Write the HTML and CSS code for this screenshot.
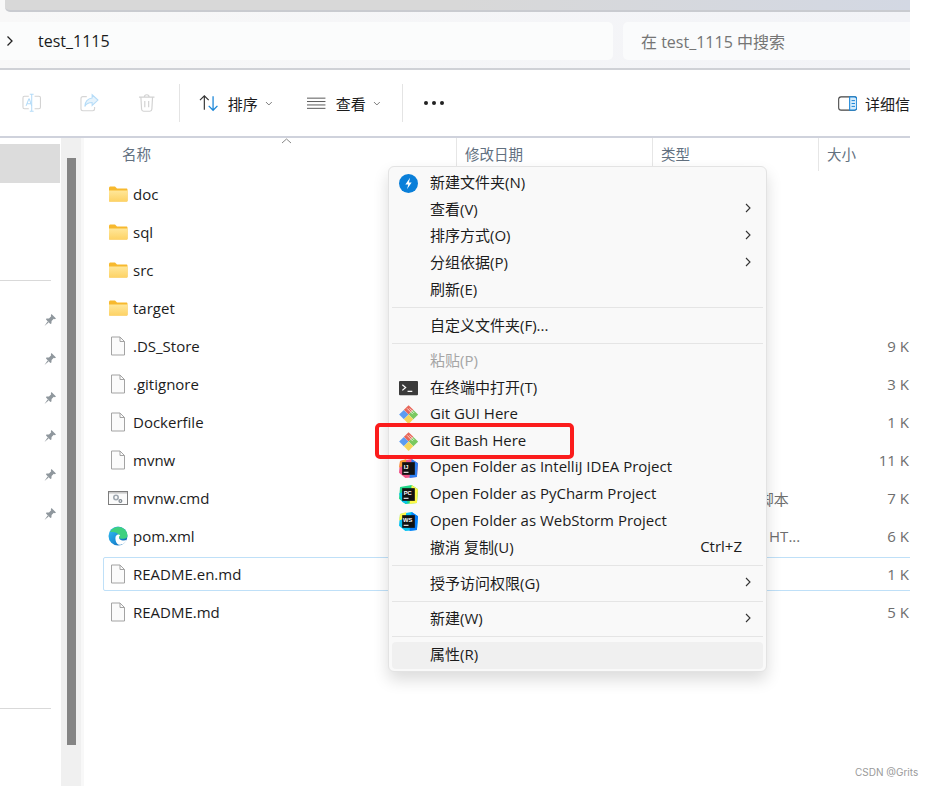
FILE: index.html
```html
<!DOCTYPE html>
<html lang="zh-CN">
<head>
  <meta charset="UTF-8">
  <title>test_1115 - 文件资源管理器</title>
  <link rel="stylesheet" href="styles.css">
</head>
<body>

<svg class="defs" width="0" height="0">
  <defs>
    <linearGradient id="folderFill" x1="0" y1="0" x2="0" y2="1">
      <stop offset="0" stop-color="#ffe79a"/>
      <stop offset="1" stop-color="#fdd264"/>
    </linearGradient>
    <linearGradient id="edgeFill" x1="0" y1="0" x2="1" y2="1">
      <stop offset="0" stop-color="#35c1f1"/>
      <stop offset="0.55" stop-color="#1b8fd8"/>
      <stop offset="1" stop-color="#0c59a4"/>
    </linearGradient>
    <symbol id="i-folder" viewBox="0 0 20 18">
      <path d="M1 3.2C1 2 1.6 1.5 2.6 1.5H7L9 3.5H18.2C19 3.5 19.5 4 19.5 4.8V15.4C19.5 16.2 19 16.6 18.2 16.6H2.2C1.4 16.6 1 16.2 1 15.4Z" fill="#f7b92e"/>
      <path d="M1 5.4H19.5V15.4C19.5 16.2 19 16.6 18.2 16.6H2.2C1.4 16.6 1 16.2 1 15.4Z" fill="url(#folderFill)"/>
    </symbol>
    <symbol id="i-file" viewBox="0 0 20 20">
      <path d="M3.5 1H12L16.5 5.5V19H3.5Z" fill="#fbfbfb" stroke="#a3a3a3"/>
      <path d="M12 1V5.5H16.5" fill="none" stroke="#a3a3a3"/>
    </symbol>
    <symbol id="i-cmd" viewBox="0 0 20 18">
      <rect x="0.5" y="2.5" width="19" height="13" fill="#fbfbfb" stroke="#7d7d7d"/>
      <rect x="1" y="3" width="18" height="1.6" fill="#c9c9c9"/>
      <circle cx="8" cy="8.5" r="2.2" fill="none" stroke="#a0a8b0" stroke-width="1.6"/>
      <circle cx="12.4" cy="12" r="1.4" fill="none" stroke="#7f8890" stroke-width="1.2"/>
    </symbol>
    <symbol id="i-edge" viewBox="0 0 20 20">
      <circle cx="10" cy="10" r="9.5" fill="url(#edgeFill)"/>
      <path d="M2 6C5 0 15 -1 18.6 6C20 9 19.6 12 17 12.6C14 13.2 10 12.6 10.6 9.6C11 7 7 5.5 2 6Z" fill="#3fd07f"/>
      <path d="M7.4 12.2C7.4 8.5 10.6 7.8 12.2 9.2C10.6 10 10.4 13.2 13.4 14.2C15.4 14.8 17.6 14.6 19 13.6C17.8 17.4 13.4 19.6 10.2 18.6C8.4 17.6 7.4 15 7.4 12.2Z" fill="#fff"/>
    </symbol>
    <symbol id="i-git" viewBox="0 0 20 20">
      <rect x="1.6" y="6.6" width="7" height="7" transform="rotate(45 5.1 10.1)" fill="#5c9cf2"/>
      <rect x="6.6" y="1.6" width="7" height="7" transform="rotate(45 10.1 5.1)" fill="#e8675a"/>
      <rect x="11.6" y="6.6" width="7" height="7" transform="rotate(45 15.1 10.1)" fill="#79c95f"/>
      <rect x="6.6" y="11.6" width="7" height="7" transform="rotate(45 10.1 15.1)" fill="#f5d55a"/>
      <path d="M8.6 3.6L14.5 9.6M11.2 3.6L16 8.4" stroke="#fff" stroke-width="0.8"/>
    </symbol>
    <symbol id="i-pin" viewBox="0 0 14 14">
      <path d="M8.5 1L13 5.5L11.8 6.2L10.8 5.8L8.6 8L8.4 10.6L7.4 11L3 6.6L3.4 5.6L6 5.4L8.2 3.2L7.8 2.2ZM4.6 8.4L5.6 9.4L1.5 13Z" fill="#8f979d"/>
    </symbol>
    <symbol id="i-chevron" viewBox="0 0 6 10">
      <path d="M1 1L5 5L1 9" fill="none" stroke="#333" stroke-width="1.1"/>
    </symbol>
  </defs>
</svg>

<div class="page">
  <div class="window">

    <div class="top">
      <div class="titlebar"></div>
      <div class="address-row">
        <div class="address">
          <svg class="crumb" width="8" height="12" viewBox="0 0 8 12"><path d="M1.5 1.5L6 6L1.5 10.5" fill="none" stroke="#222" stroke-width="1.3"/></svg>
          <span>test_1115</span>
        </div>
        <div class="search">在 test_1115 中搜索</div>
      </div>
    </div>

    <div class="toolbar">
      <svg class="tool-rename" width="20" height="20" viewBox="0 0 20 20">
        <path d="M7 3H2.5C1.4 3 1 3.6 1 4.5V14.5C1 15.5 1.4 16 2.5 16H7M13 3H17.5C18.6 3 19 3.6 19 4.5V14.5C19 15.5 18.6 16 17.5 16H13" fill="none" stroke="#d2d2d2" stroke-width="1.1"/>
        <path d="M10 1V18.5M8 1H12M8 18.5H12" fill="none" stroke="#b5dcf8" stroke-width="1.1"/>
        <path d="M4.2 13L7 6H7.6L10 13M5 10.8H9" fill="none" stroke="#b5dcf8" stroke-width="1.1"/>
      </svg>
      <svg class="tool-share" width="20" height="20" viewBox="0 0 20 20">
        <path d="M7 3.5H3C1.8 3.5 1 4.3 1 5.5V16C1 17.2 1.8 18 3 18H13C14.2 18 15 17.2 15 16V14" fill="none" stroke="#d5d5d5" stroke-width="1.2"/>
        <path d="M12.5 1.5L18.5 7L12.5 12.5V9.5C9 9.5 6.5 10.5 5 13.5C5 9 8 5.2 12.5 4.8Z" fill="#e6f3fc" stroke="#b5dcf8" stroke-width="1.1"/>
      </svg>
      <svg class="tool-trash" width="18" height="20" viewBox="0 0 18 20">
        <path d="M1 4H17M6.5 4C6.5 2.4 7.4 1.5 9 1.5C10.6 1.5 11.5 2.4 11.5 4M3 4L3.7 16.5C3.8 17.8 4.6 18.5 5.8 18.5H12.2C13.4 18.5 14.2 17.8 14.3 16.5L15 4M7 8V14.5M11 8V14.5" fill="none" stroke="#d2d2d2" stroke-width="1.2"/>
      </svg>
      <div class="tool-sep"></div>
      <svg class="tool-sort" width="20" height="18" viewBox="0 0 20 18">
        <path d="M5.5 16V1.5M1 6L5.5 1.5L10 6" fill="none" stroke="#333" stroke-width="1.2"/>
        <path d="M14.5 2V16.5M10 12L14.5 16.5L19 12" fill="none" stroke="#1a86d8" stroke-width="1.3"/>
      </svg>
      <span class="tool-label">排序</span>
      <svg class="caret" width="8" height="5" viewBox="0 0 8 5"><path d="M1 1L4 4L7 1" fill="none" stroke="#777"/></svg>
      <svg class="tool-view" width="19" height="12" viewBox="0 0 19 12">
        <path d="M0 1H19M0 4.5H19M0 8H19M0 11.5H19" stroke="#555" stroke-width="1"/>
      </svg>
      <span class="tool-label">查看</span>
      <svg class="caret" width="8" height="5" viewBox="0 0 8 5"><path d="M1 1L4 4L7 1" fill="none" stroke="#777"/></svg>
      <div class="tool-sep tool-sep-2"></div>
      <div class="dots"><i></i><i></i><i></i></div>
      <svg class="tool-details" width="20" height="15" viewBox="0 0 20 15">
        <rect x="0.7" y="0.7" width="18.6" height="13.6" rx="2.5" fill="#fff" stroke="#444" stroke-width="1.1"/>
        <path d="M12 0.7H17C18.5 0.7 19.3 1.5 19.3 3V12C19.3 13.5 18.5 14.3 17 14.3H12Z" fill="#d7ecfb" stroke="#1a86d8" stroke-width="1.1"/>
        <path d="M14 4.5H17.5M14 7.5H17.5M14 10.5H17.5" stroke="#1a86d8"/>
      </svg>
      <span class="tool-label">详细信</span>
    </div>

    <div class="explorer">
      <aside class="sidebar">
        <div class="nav-selected"></div>
        <div class="nav-line"></div>
        <div class="pins">
          <svg class="pin"><use href="#i-pin"/></svg>
          <svg class="pin"><use href="#i-pin"/></svg>
          <svg class="pin"><use href="#i-pin"/></svg>
          <svg class="pin"><use href="#i-pin"/></svg>
          <svg class="pin"><use href="#i-pin"/></svg>
          <svg class="pin"><use href="#i-pin"/></svg>
        </div>
        <div class="nav-line nav-line-2"></div>
      </aside>
      <div class="scrollbar"><div class="thumb"></div></div>

      <main class="files">
        <div class="file-head">
          <div class="head-cell head-name">名称
            <svg class="sort-mark" width="11" height="6" viewBox="0 0 11 6"><path d="M1 5L5.5 1L10 5" fill="none" stroke="#888"/></svg>
          </div>
          <div class="head-cell">修改日期</div>
          <div class="head-cell">类型</div>
          <div class="head-cell">大小</div>
        </div>
        <div class="file-list">
          <div class="file-row"><svg class="ficon"><use href="#i-folder"/></svg><span class="fname">doc</span></div>
          <div class="file-row"><svg class="ficon"><use href="#i-folder"/></svg><span class="fname">sql</span></div>
          <div class="file-row"><svg class="ficon"><use href="#i-folder"/></svg><span class="fname">src</span></div>
          <div class="file-row"><svg class="ficon"><use href="#i-folder"/></svg><span class="fname">target</span></div>
          <div class="file-row"><svg class="ficon"><use href="#i-file"/></svg><span class="fname">.DS_Store</span><span class="fsize">9 K</span></div>
          <div class="file-row"><svg class="ficon"><use href="#i-file"/></svg><span class="fname">.gitignore</span><span class="fsize">3 K</span></div>
          <div class="file-row"><svg class="ficon"><use href="#i-file"/></svg><span class="fname">Dockerfile</span><span class="fsize">1 K</span></div>
          <div class="file-row"><svg class="ficon"><use href="#i-file"/></svg><span class="fname">mvnw</span><span class="fsize">11 K</span></div>
          <div class="file-row"><svg class="ficon"><use href="#i-cmd"/></svg><span class="fname">mvnw.cmd</span><span class="ftype">Windows 命令脚本</span><span class="fsize">7 K</span></div>
          <div class="file-row"><svg class="ficon"><use href="#i-edge"/></svg><span class="fname">pom.xml</span><span class="ftype">Microsoft Edge HT...</span><span class="fsize">6 K</span></div>
          <div class="file-row focused"><svg class="ficon"><use href="#i-file"/></svg><span class="fname">README.en.md</span><span class="fsize">1 K</span></div>
          <div class="file-row"><svg class="ficon"><use href="#i-file"/></svg><span class="fname">README.md</span><span class="fsize">5 K</span></div>
        </div>
      </main>
    </div>
  </div>

  <div class="menu">
    <div class="menu-item">
      <svg class="micon" viewBox="0 0 18 18"><circle cx="9" cy="9" r="9" fill="#0a7fd9"/><path d="M10.5 3.5L6 10H8.8L7.6 14.5L12 8H9.4Z" fill="#fff"/></svg>
      <span>新建文件夹(N)</span>
    </div>
    <div class="menu-item"><span>查看(V)</span><svg class="arrow"><use href="#i-chevron"/></svg></div>
    <div class="menu-item"><span>排序方式(O)</span><svg class="arrow"><use href="#i-chevron"/></svg></div>
    <div class="menu-item"><span>分组依据(P)</span><svg class="arrow"><use href="#i-chevron"/></svg></div>
    <div class="menu-item"><span>刷新(E)</span></div>
    <div class="menu-sep"></div>
    <div class="menu-item"><span>自定义文件夹(F)...</span></div>
    <div class="menu-sep"></div>
    <div class="menu-item disabled"><span>粘贴(P)</span></div>
    <div class="menu-item">
      <svg class="micon" viewBox="0 0 20 18"><rect y="1" width="20" height="15" rx="1" fill="#3b3b3b"/><path d="M3.5 5L7 8L3.5 11" fill="none" stroke="#fff" stroke-width="1.3"/><path d="M9 12H14" stroke="#fff" stroke-width="1.3"/></svg>
      <span>在终端中打开(T)</span>
    </div>
    <div class="menu-item"><svg class="micon"><use href="#i-git"/></svg><span>Git GUI Here</span></div>
    <div class="menu-item"><svg class="micon"><use href="#i-git"/></svg><span>Git Bash Here</span></div>
    <div class="menu-item">
      <svg class="micon" viewBox="0 0 18 18"><path d="M1 2L12 0L18 4L17 17L6 18L0 13Z" fill="#f0568a"/><path d="M12 0L18 4L17 17L10 18Z" fill="#2f7ff0"/><path d="M1 2L7 0L6 6L0 8Z" fill="#fb9a33"/><rect x="3" y="3" width="12" height="12" fill="#111"/><text class="jb-text" x="4.4" y="9.4">IJ</text><path d="M4.4 12.6H9" stroke="#fff"/></svg>
      <span>Open Folder as IntelliJ IDEA Project</span>
    </div>
    <div class="menu-item">
      <svg class="micon" viewBox="0 0 18 18"><path d="M1 2L12 0L18 4L17 17L6 18L0 13Z" fill="#21d789"/><path d="M12 0L18 4L17 17L10 18Z" fill="#fcf84a"/><path d="M0 8L6 6L8 18L3 16Z" fill="#07c3f2"/><rect x="3" y="3" width="12" height="12" fill="#111"/><text class="jb-text" x="4.4" y="9.4">PC</text><path d="M4.4 12.6H9" stroke="#fff"/></svg>
      <span>Open Folder as PyCharm Project</span>
    </div>
    <div class="menu-item">
      <svg class="micon" viewBox="0 0 18 18"><path d="M1 2L12 0L18 4L17 17L6 18L0 13Z" fill="#07c3f2"/><path d="M12 0L18 4L17 17L10 18Z" fill="#087cfa"/><path d="M1 2L7 0L6 6L0 8Z" fill="#fcf84a"/><rect x="3" y="3" width="12" height="12" fill="#111"/><text class="jb-text" x="3.8" y="9.4">WS</text><path d="M4.4 12.6H9" stroke="#fff"/></svg>
      <span>Open Folder as WebStorm Project</span>
    </div>
    <div class="menu-item"><span>撤消 复制(U)</span><span class="shortcut">Ctrl+Z</span></div>
    <div class="menu-sep"></div>
    <div class="menu-item"><span>授予访问权限(G)</span><svg class="arrow"><use href="#i-chevron"/></svg></div>
    <div class="menu-sep"></div>
    <div class="menu-item"><span>新建(W)</span><svg class="arrow"><use href="#i-chevron"/></svg></div>
    <div class="menu-sep"></div>
    <div class="menu-item hover"><span>属性(R)</span></div>
  </div>

  <div class="red-box"></div>
  <div class="watermark">CSDN @Grits</div>
</div>

</body>
</html>
```

FILE: styles.css
```css
* {
  box-sizing: border-box;
}

body {
  margin: 0;
  background: white;
  font-family: "Open Sans", "Noto Sans CJK SC", sans-serif;
  color: #1c1c1c;
}

.defs {
  position: absolute;
}

.page {
  position: relative;
  width: 934px;
  height: 786px;
  overflow: hidden;
}

.window {
  display: flex;
  flex-direction: column;
  width: 910px;
  height: 786px;
  overflow: hidden;
  background: white;
}

/* title bar and address row */
.top {
  height: 70px;
  flex: none;
  background: linear-gradient(to right, #f8f8f8, #f2f3f7);
  border-bottom: 2px solid #cfd1d6;
}

.titlebar {
  height: 12px;
  margin-left: 5px;
  background: linear-gradient(to right, #d8d8d8 50%, #d3d8e3);
  border-bottom: 2px solid #c9cbd0;
  border-bottom-left-radius: 5px;
}

.address-row {
  display: flex;
  gap: 10px;
  height: 38px;
  margin-top: 10px;
}

.address {
  display: flex;
  align-items: center;
  width: 613px;
  padding-left: 6px;
  background: #fbfcfc;
  border-radius: 0 5px 5px 0;
  font-size: 16px;
}

.crumb {
  margin-right: 24px;
}

.search {
  flex: 1;
  padding: 7px 0 0 18px;
  background: #fafbfc;
  border-radius: 5px 0 0 5px;
  font-size: 16px;
  color: #757575;
}

/* command bar */
.toolbar {
  display: flex;
  align-items: center;
  height: 68px;
  flex: none;
  border-bottom: 2px solid #cfd2dc;
  font-size: 15px;
  white-space: nowrap;
}

.tool-rename { margin-left: 22px; }
.tool-share { margin-left: 39px; }
.tool-trash { margin-left: 38px; }

.tool-sep {
  width: 1px;
  height: 38px;
  margin-left: 24px;
  background: #e4e4e4;
}

.tool-sort { margin-left: 19px; margin-right: 9px; }
.caret { margin-left: 7px; }
.tool-view { margin-left: 35px; margin-right: 10px; }
.tool-sep-2 { margin-left: 21px; }

.dots {
  display: flex;
  gap: 4px;
  margin-left: 21px;
}

.dots i {
  width: 4px;
  height: 4px;
  border-radius: 50%;
  background: #222;
}

.tool-details { margin-left: 394px; margin-right: 8px; }

/* sidebar and scrollbar */
.explorer {
  display: flex;
  flex: 1;
  min-height: 0;
}

.sidebar {
  width: 61px;
  flex: none;
  padding-top: 6px;
}

.nav-selected {
  width: 60px;
  height: 39px;
  background: #dcdcdc;
}

.nav-line {
  width: 51px;
  height: 1px;
  margin-top: 97px;
  background: #d9d9d9;
}

.nav-line-2 {
  margin-top: 187px;
}

.pins {
  display: flex;
  flex-direction: column;
  align-items: flex-end;
  gap: 24.8px;
  margin-top: 32px;
  padding-right: 4px;
}

.pin {
  width: 14px;
  height: 14px;
}

.scrollbar {
  width: 23px;
  flex: none;
  padding: 20px 0 0 6px;
  background: #f0f0f0;
  border-right: 3px solid #f8f8f8;
}

.thumb {
  width: 9px;
  height: 587px;
  background: #858585;
}

/* file list */
.files {
  width: 826px;
  flex: none;
}

.file-head {
  display: grid;
  grid-template-columns: 373px 196px 166px 115px;
  height: 33px;
}

.head-cell {
  padding: 5px 0 0 8px;
  font-size: 14.5px;
  color: #62707f;
  border-right: 1px solid #e6e6e6;
}

.head-name {
  position: relative;
  padding-left: 38px;
}

.sort-mark {
  position: absolute;
  left: 197px;
  top: 0;
}

.file-list {
  display: flex;
  flex-direction: column;
  gap: 4px;
  padding: 6px 0 0 19px;
}

.file-row {
  display: flex;
  position: relative;
  align-items: center;
  height: 34px;
  margin-right: -4px;
  padding: 0 4px 0 4px;
  font-size: 15px;
  border: 1px solid transparent;
}

.file-row.focused {
  border-color: #bfe0f8;
  border-radius: 2px;
}

.ficon {
  width: 20px;
  height: 20px;
  flex: none;
}

.fname {
  margin-left: 5px;
}

.ftype {
  position: absolute;
  left: 557px;
  color: #6e6e6e;
  font-size: 15px;
  white-space: nowrap;
}

.fsize {
  margin-left: auto;
  color: #6e6e6e;
  font-size: 15px;
}

/* context menu */
.menu {
  position: absolute;
  left: 388px;
  top: 166px;
  width: 379px;
  height: 506px;
  padding: 3px 3px;
  background: #f9f9f9;
  border: 1px solid #e3e3e3;
  border-radius: 6px;
  box-shadow: 0 8px 16px rgba(0, 0, 0, 0.14);
  font-size: 15px;
}

.menu-item {
  display: flex;
  align-items: center;
  height: 26.6px;
  padding: 0 12px 3px 38px;
  position: relative;
  white-space: nowrap;
}

.menu-item.disabled {
  color: #a5a5a5;
}

.menu-item.hover {
  background: #f0f0f0;
  border-radius: 4px;
}

.micon {
  position: absolute;
  left: 7px;
  top: 4px;
  width: 19px;
  height: 19px;
}

.jb-text {
  font-family: "Liberation Sans", sans-serif;
  font-size: 5.5px;
  font-weight: bold;
  fill: white;
}

.arrow {
  width: 6px;
  height: 10px;
  margin-left: auto;
}

.shortcut {
  margin-left: auto;
  margin-right: 9px;
}

.menu-sep {
  height: 1px;
  margin: 3.8px 0 4.5px;
  background: #e5e5e5;
}

/* annotation on top of the screenshot */
.red-box {
  position: absolute;
  left: 375px;
  top: 423px;
  width: 199px;
  height: 36px;
  border: 4px solid #fb1c1c;
  border-radius: 5px;
}

.watermark {
  position: absolute;
  left: 855px;
  top: 766px;
  font-family: "Inter", sans-serif;
  font-size: 10px;
  color: #9a9a9a;
}
```
